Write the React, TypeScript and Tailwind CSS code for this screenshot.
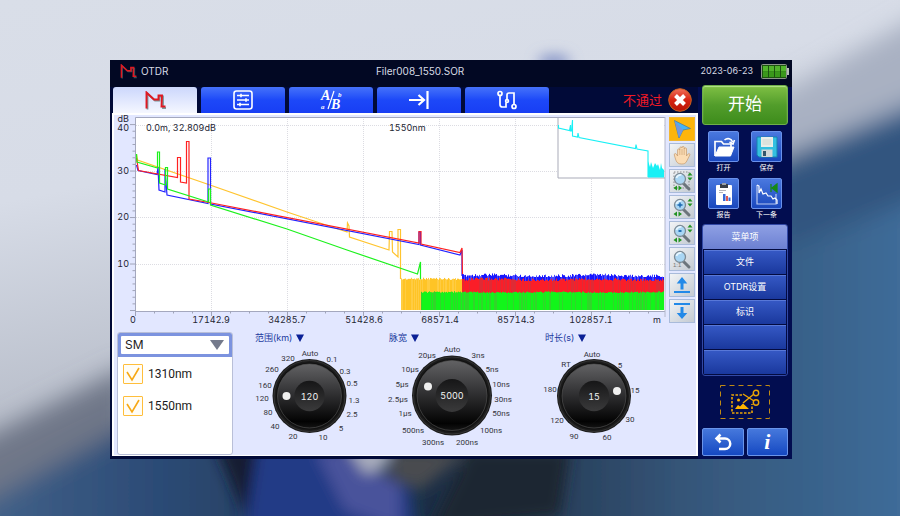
import React, { useState } from "react";

const SANS = "font-['Inter','Noto_Sans_CJK_SC',sans-serif]";
const NARROW = "font-['Roboto','Noto_Sans_CJK_SC',sans-serif]";

/* ---------- Backdrop ---------- */

function Backdrop() {
  return (
    <svg
      className="absolute inset-0 h-full w-full"
      viewBox="0 0 900 516"
      preserveAspectRatio="xMidYMid slice"
      aria-hidden="true"
    >
      <defs>
        <linearGradient id="sky" x1="0" y1="0" x2="0.35" y2="1">
          <stop offset="0" stopColor="#d9dee8" />
          <stop offset="0.35" stopColor="#d7dce7" />
          <stop offset="1" stopColor="#a3a9b6" />
        </linearGradient>
        <linearGradient id="sea" x1="0" y1="0" x2="1" y2="0">
          <stop offset="0" stopColor="#45658c" />
          <stop offset="0.2" stopColor="#2c4b76" />
          <stop offset="0.5" stopColor="#1d2d42" />
          <stop offset="0.75" stopColor="#36577b" />
          <stop offset="0.9" stopColor="#3a658f" />
          <stop offset="1" stopColor="#42709f" />
        </linearGradient>
        <filter id="soft" x="-20%" y="-20%" width="140%" height="140%">
          <feGaussianBlur stdDeviation="12" />
        </filter>
        <filter id="softer" x="-60%" y="-60%" width="220%" height="220%">
          <feGaussianBlur stdDeviation="7" />
        </filter>
      </defs>
      <rect width="900" height="516" fill="url(#sky)" />
      <g filter="url(#soft)">
        <polygon points="930,10 770,100 770,190 930,110" fill="#a9b1c2" />
        <polygon points="-40,450 130,365 130,470 -40,510" fill="#6f7788" />
        <polygon points="-40,515 130,425 500,300 780,158 940,92 940,560 -40,560" fill="url(#sea)" />
        <polygon points="780,170 940,100 940,190 780,250" fill="#30557f" />
      </g>
      <g filter="url(#softer)">
        <polygon points="215,445 262,445 275,516 245,516" fill="#131b33" />
        <polygon points="258,445 330,445 410,490 415,530 245,530" fill="#213a86" />
        <polygon points="315,450 345,450 400,485 400,530 345,510" fill="#4a529b" />
        <polygon points="345,445 395,445 385,468 365,474" fill="#a9adbd" />
        <polygon points="395,450 470,450 420,490 390,478" fill="#4a4c50" />
        <polygon points="470,450 570,450 560,516 430,530" fill="#1b2533" />
        <ellipse cx="554" cy="62" rx="16" ry="7" fill="#7f8ec4" />
      </g>
    </svg>
  );
}

/* ---------- Glyphs ---------- */

function TraceMark({ className }: { className: string }) {
  return (
    <svg viewBox="0 0 21 19" className={className} fill="none" aria-hidden="true">
      <path d="M2.500 18.500V2.500L10 9.500H14.500V5.500H18V17H21" stroke="#4d7470" strokeWidth="1.800" opacity="0.700" />
      <path d="M1.500 17.500V1.500L9 8.500H13.500V4.500H17L16.500 15.500H20.500" stroke="#e01822" strokeWidth="1.900" />
    </svg>
  );
}

function Battery() {
  return (
    <svg viewBox="0 0 28 15" className="h-[15px] w-7" aria-label="电池">
      <rect x="0.5" y="0.5" width="25" height="14" rx="1" fill="#1c5310" stroke="#8d968a" />
      {[2, 8, 14, 20].map((x) => (
        <g key={x}>
          <rect x={x} y="2" width="5" height="5.500" fill="#52b32c" />
          <rect x={x} y="7.500" width="5" height="5.500" fill="#3a981b" />
        </g>
      ))}
      <rect x="26" y="4" width="2" height="7" fill="#b9beb9" />
    </svg>
  );
}

const tabIcons = [
  <TraceMark key="t" className="h-[19px] w-[21px]" />,
  <svg key="s" viewBox="0 0 20 20" className="h-5 w-5" fill="none" stroke="#fff" strokeWidth="1.6" aria-hidden="true">
    <rect x="1" y="1" width="18" height="18" rx="2.5" />
    <path d="M4 5.5h12M4 10h12M4 14.5h12M8 3.7v3.6M13 8.2v3.6M7 12.7v3.6" />
  </svg>,
  <svg key="a" viewBox="0 0 26 22" className="h-[22px] w-[26px]" fill="#fff" aria-hidden="true">
    <g fontFamily="Liberation Serif, serif" fontStyle="italic" fontWeight="700">
      <text x="3" y="11" fontSize="14">
        A
      </text>
      <text x="13" y="20" fontSize="14">
        B
      </text>
      <text x="20" y="8" fontSize="7">
        b
      </text>
      <text x="3" y="20" fontSize="7">
        a
      </text>
    </g>
    <path d="M16 2L10 20" stroke="#fff" strokeWidth="1.2" />
  </svg>,
  <svg key="e" viewBox="0 0 20 20" className="h-5 w-5" fill="none" stroke="#fff" strokeWidth="2.200" aria-hidden="true">
    <path d="M0 10h14M9.500 5l5.500 5-5.500 5M18.500 1v18" />
  </svg>,
  <svg key="r" viewBox="0 0 20 20" className="h-5 w-5" fill="none" stroke="#fff" strokeWidth="1.7" aria-hidden="true">
    <circle cx="3" cy="3.500" r="2" />
    <circle cx="17" cy="16.500" r="2" />
    <circle cx="10" cy="11" r="1.400" />
    <path d="M3 5.500V14.500Q3 17 5.500 17H9V12.500M10 9.500V5Q10 3 12 3H17V14.500" />
  </svg>,
];

const tabNames = ["曲线", "参数", "A/B", "末端", "链路"];

function Magnifier({ mark, pads }: { mark: string; pads: boolean }) {
  return (
    <svg viewBox="0 0 22 22" className="h-[22px] w-[22px]" aria-hidden="true">
      {mark === "box" && (
        <rect x="3" y="2" width="15" height="16" fill="none" stroke="#777" strokeWidth="0.8" strokeDasharray="1.500 1.500" />
      )}
      <path d="M12 13l6 6" stroke="#6c757c" strokeWidth="3" strokeLinecap="round" />
      <circle cx="9" cy="9" r="5.500" fill="#a9d6f4" stroke="#7d8b96" strokeWidth="1.300" />
      <path d="M5.500 8a4 4 0 0 1 5-3" stroke="#e6f6ff" strokeWidth="1.800" fill="none" />
      {mark === "plus" && <path d="M6.500 9h5M9 6.500v5" stroke="#1766ad" strokeWidth="1.400" />}
      {mark === "minus" && <path d="M7.500 9h3" stroke="#1766ad" strokeWidth="1.800" />}
      {mark === "one" && (
        <text x="2" y="19" fontSize="6" fill="#777" fontFamily="Liberation Sans, sans-serif">
          1:1
        </text>
      )}
      {pads && (
        <g fill="#229322">
          <path d="M16.500 5.500l2.500-3 2.500 3zM16.500 7.500l2.500 3 2.500-3z" />
          <path d="M6 15.500l-3.500 2.500 3.500 2.500zM7.500 15.500l3.500 2.500-3.500 2.500z" />
        </g>
      )}
    </svg>
  );
}

function Arrow({ down }: { down?: boolean }) {
  return (
    <svg viewBox="0 0 20 20" className="h-5 w-5" fill="#2289e8" aria-hidden="true">
      {down ? (
        <path d="M2 2h16v2H2zM8.500 6h3v6h3.800l-5.300 6-5.300-6h3.800z" />
      ) : (
        <path d="M2 16h16v2H2zM8.500 14.500h3v-6h3.800l-5.300-6.500-5.300 6.500h3.800z" />
      )}
    </svg>
  );
}

const tools = [
  {
    name: "选择",
    icon: (
      <svg viewBox="0 0 20 20" className="h-5 w-5" aria-hidden="true">
        <path d="M2.500 1.500L18.500 9.500l-7.500 1.500-4 8z" fill="#45b4f5" stroke="#4f7993" strokeWidth="0.700" />
        <path d="M2.500 1.500L11 11l-4 8z" fill="#7397df" />
      </svg>
    ),
  },
  {
    name: "平移",
    icon: (
      <svg viewBox="0 0 20 20" className="h-5 w-5" aria-hidden="true">
        <path
          d="M5.600 11V5a1.100 1.100 0 0 1 2.200 0V3a1.100 1.100 0 0 1 2.200 0V2.500a1.100 1.100 0 0 1 2.200 0V4a1.100 1.100 0 0 1 2.300 0v7l1.600-2c1-1 2.200 0 1.700 1l-3 6c-1 2.500-3 3-5 3-3 0-5-1-6-4l-1.500-5c-.4-1.500 1.300-2 2-1z"
          fill="#fbdcb4"
          stroke="#c49a6c"
          strokeWidth="0.700"
        />
        <path d="M7.800 5v5M10 4v6M12.200 4v6" stroke="#c49a6c" strokeWidth="0.600" />
      </svg>
    ),
  },
  { name: "框选缩放", icon: <Magnifier mark="box" pads /> },
  { name: "放大", icon: <Magnifier mark="plus" pads /> },
  { name: "缩小", icon: <Magnifier mark="minus" pads /> },
  { name: "原始比例", icon: <Magnifier mark="one" pads={false} /> },
  { name: "上移", icon: <Arrow /> },
  { name: "下移", icon: <Arrow down /> },
];

/* ---------- Chart ---------- */

const xLabels: [number, string][] = [
  [133, "0"],
  [211, "17142.9"],
  [287, "34285.7"],
  [364, "51428.6"],
  [440, "68571.4"],
  [516, "85714.3"],
  [591, "102857.1"],
  [657, "m"],
];

const yLabels: [number, string][] = [
  [122, "dB"],
  [131, "40"],
  [174, "30"],
  [220, "20"],
  [267, "10"],
];

const wobble = (i: number, seed: number) => {
  const v = Math.sin(i * 12.9898 + seed * 78.233) * 43758.5453;
  return v - Math.floor(v);
};

function Noise(props: { from: number; to: number; top: number; bottom: number; jitter: number; seed: number; colors: string[] }) {
  const { from, to, top, bottom, jitter, seed, colors } = props;
  const bars = [];
  for (let x = from; x < to; x += 1) {
    const i = x - from;
    const y = top + wobble(i, seed) * jitter - Math.sin(i / 17) * jitter * 0.2;
    const tone = wobble(i, seed + 5) > 0.72 ? 1 : 0;
    bars.push(<rect key={x} x={x} y={y} width={1} height={bottom - y} fill={colors[tone]} />);
  }
  return (
    <g>
      <rect x={from} y={top + jitter} width={to - from} height={bottom - top - jitter} fill={colors[0]} />
      {bars}
    </g>
  );
}

function Chart() {
  const yTicks = Array.from({ length: 29 }, (_, i) => 310.5 - i * 6.64);
  const xTicks = Array.from({ length: 28 }, (_, i) => 135.500 + i * 19);
  return (
    <svg viewBox="114 115 554 211" className="block min-w-0 flex-1 overflow-visible" role="img" aria-label="OTDR 曲线">
      <rect x="136" y="117" width="529" height="194" fill="#fff" />
      <g stroke="#dcdce2" strokeDasharray="1 1">
        {[211.5, 287.5, 363.5, 439.5, 515.5, 591.5].map((x) => (
          <path key={x} d={`M${x} 117V311`} />
        ))}
        {[125.5, 171.5, 217.5, 264.5].map((y) => (
          <path key={y} d={`M136 ${y}H665`} />
        ))}
      </g>
      <path d="M135.500 311V117.500H665M135.500 311.500H665" fill="none" stroke="#a4a8be" />
      <path d="M665 117V317" stroke="#b4b8ca" />
      <g stroke="#a0a4b8">
        {yTicks.map((y, i) => (
          <path key={i} d={`M${i % 7 === 0 ? 130 : 132.5} ${y}H135.500`} />
        ))}
        {xTicks.map((x, i) => (
          <path key={i} d={`M${x} 311V${i % 4 === 0 ? 316 : 313.5}`} />
        ))}
      </g>

      <g fill="none" strokeWidth="1.200">
        <path
          stroke="#ffc42e"
          d="M136.500 154L137.500 160L210 185L287 212L347 232L347.500 223L349 226L349.500 237L389 250L389.500 231.500H392L392.500 252L398 257V229.500H400.500V279"
        />
        <path
          stroke="#2323ff"
          d="M136.500 165L138 170.500L157 174.500L158 167L159 190L165 192V169L167 195L208 203.500V158H210.500V204L419 244.500V232H420.500V245L460 255L462 250V276"
        />
        <path
          stroke="#ff2020"
          d="M136.500 158L138.500 170.500L177.500 177.500V157.500H180.500V182L186.500 183V141.500H189V199L209 202.500L419 243V231.500H421V244L460 252.500L462 248L462.500 276"
        />
        <path
          stroke="#1cf11c"
          d="M136.500 154L137 162L157.500 168V152H159.500V183L165.500 185V167.500H167.500V189L208.500 202V189H210.500V205L287 229L347 250L417.500 274L420.500 262V309"
        />
      </g>

      <Noise from={401} to={462} top={278} bottom={310} jitter={2} seed={1} colors={["#ffc425", "#ffcc42"]} />
      <Noise from={462} to={664} top={274} bottom={286} jitter={3} seed={2} colors={["#1616ff", "#4747ff"]} />
      <Noise from={462} to={664} top={278} bottom={294} jitter={3} seed={3} colors={["#fb1e28", "#df2b35"]} />
      <Noise from={421} to={664} top={291.5} bottom={310} jitter={1.5} seed={4} colors={["#12f51a", "#31d52a"]} />

      <rect x="558" y="118" width="106" height="60" fill="#fff" />
      <path d="M558 118V178H665" fill="none" stroke="#a9abb8" />
      <path
        fill="none"
        stroke="#19f0f5"
        strokeWidth="1.100"
        d="M558.500 125V128L569.500 130.500L570.500 125V131L571.500 131L572.500 120V136L577.500 137L578 133L579 137.500L635.500 148.500L636 144.500L637 149L648 151V177"
      />
      <path d="M648 177.500V161L650 167L651 162L653 168L655 163L657 166L658 164L660 170L661 163L662 168L664 170V177.500Z" fill="#19f0f5" />

      <g fontFamily="Inter, sans-serif" fontSize="9" fill="#242633" className="tabular-nums">
        {yLabels.map(([y, t]) => (
          <text key={t} x="129" y={y} textAnchor="end">
            {t}
          </text>
        ))}
        {xLabels.map(([x, t]) => (
          <text key={t} x={x} y="323" textAnchor="middle">
            {t}
          </text>
        ))}
        <text x="146" y="131">
          0.0m, 32.809dB
        </text>
        <text x="389" y="131">
          1550nm
        </text>
      </g>
    </svg>
  );
}

/* ---------- Dials ---------- */

type Dial = {
  title: string;
  pad: string;
  left: number;
  cx: number;
  cy: number;
  r: number;
  value: string;
  dot: [number, number];
  marks: [number, number, string][];
};

const dials: Dial[] = [
  {
    title: "范围(km)",
    pad: "pl-4",
    left: 239,
    cx: 309.5,
    cy: 396,
    r: 37,
    value: "120",
    dot: [286.5, 396],
    marks: [
      [310, 353, "Auto"], [332, 359, "0.1"], [345, 371, "0.3"], [352, 383, "0.5"], [354, 400, "1.3"],
      [352, 414, "2.5"], [341, 428, "5"], [323, 437, "10"], [293, 436, "20"], [275, 426, "40"],
      [268, 412, "80"], [262, 398, "120"], [265, 385, "160"], [272, 369, "260"], [288, 358, "320"],
    ],
  },
  {
    title: "脉宽",
    pad: "pl-2",
    left: 381,
    cx: 452,
    cy: 395.5,
    r: 40,
    value: "5000",
    dot: [428, 386.5],
    marks: [
      [452, 349, "Auto"], [478, 355, "3ns"], [492, 369, "5ns"], [501, 384, "10ns"], [503, 399, "30ns"],
      [501, 413, "50ns"], [491, 430, "100ns"], [467, 442, "200ns"], [433, 442, "300ns"], [413, 430, "500ns"],
      [405, 413, "1µs"], [398, 399, "2.5µs"], [402, 384, "5µs"], [410, 369, "10µs"], [427, 355, "20µs"],
    ],
  },
  {
    title: "时长(s)",
    pad: "pl-[22px]",
    left: 523,
    cx: 594,
    cy: 396,
    r: 37,
    value: "15",
    dot: [617, 391],
    marks: [
      [592, 354, "Auto"], [620, 365, "5"], [635, 390, "15"], [630, 419, "30"], [607, 437, "60"],
      [574, 436, "90"], [557, 420, "120"], [550, 389, "180"], [566, 364, "RT"],
    ],
  },
];

function DialControl({ dial }: { dial: Dial }) {
  const { cx, cy, r } = dial;
  return (
    <div className="min-w-0">
      <button type="button" className={`flex h-3 items-center gap-1 text-[9px] leading-3 text-[#1c3a9e] ${dial.pad}`}>
        {dial.title}
        <svg viewBox="0 0 8 8" className="h-2 w-2" fill="#0a2096" aria-hidden="true">
          <path d="M0 0.500h8L4 8z" />
        </svg>
      </button>
      <div className="relative">
        <svg viewBox={`${dial.left} 344 142 111`} className="block w-full" aria-hidden="true">
          <defs>
            <linearGradient id="cap" x1="0" y1="0" x2="0" y2="1">
              <stop offset="0" stopColor="#626264" />
              <stop offset="0.45" stopColor="#323234" />
              <stop offset="0.9" stopColor="#030303" />
              <stop offset="1" stopColor="#141414" />
            </linearGradient>
            <linearGradient id="hub" x1="0" y1="0" x2="0" y2="1">
              <stop offset="0" stopColor="#161617" />
              <stop offset="1" stopColor="#3a3a3b" />
            </linearGradient>
          </defs>
          <circle cx={cx} cy={cy} r={r} fill="#1b1b1b" />
          <circle cx={cx} cy={cy} r={r - 1.5} fill="none" stroke="#343434" />
          <circle cx={cx} cy={cy} r={r - 3.5} fill="#111" />
          <circle cx={cx} cy={cy} r={r - 5} fill="url(#cap)" stroke="#555" strokeWidth="0.600" />
          <circle cx={cx} cy={cy} r={r * 0.41} fill="url(#hub)" />
          <circle cx={dial.dot[0]} cy={dial.dot[1]} r="4" fill="#f0f0f0" />
          <text
            x={cx}
            y={cy + 3.5}
            textAnchor="middle"
            fontFamily="Inter, sans-serif"
            fontSize={9}
            fill="#f2f2f2"
            className="tabular-nums"
          >
            {dial.value}
          </text>
          <g className={NARROW} fontSize="8" fill="#34353c" textAnchor="middle">
            {dial.marks.map(([x, y, t]) => (
              <text key={t} x={x} y={y + 3}>
                {t}
              </text>
            ))}
          </g>
        </svg>
        <input
          type="range"
          min={0}
          max={dial.marks.length - 1}
          defaultValue={0}
          aria-label={dial.title}
          className="absolute inset-x-8 inset-y-4 cursor-pointer opacity-0"
        />
      </div>
    </div>
  );
}

/* ---------- Side column ---------- */

const shortcuts = [
  {
    name: "打开",
    icon: (
      <svg viewBox="0 0 24 24" className="h-6 w-6" fill="none" aria-hidden="true">
        <path d="M3 21V6.500h6.500l2 2.500h7.500v3" stroke="#fff" strokeWidth="1.700" />
        <path d="M3 21l4-9h15L18.500 21z" fill="#fff" stroke="#fff" strokeLinejoin="round" />
        <path d="M12.500 5c3-2.500 7-1.500 8 2M22.500 5L21 9l-3.500-2" stroke="#fff" strokeWidth="1.600" />
      </svg>
    ),
  },
  {
    name: "保存",
    icon: (
      <svg viewBox="0 0 24 24" className="h-6 w-6" aria-hidden="true">
        <path d="M2 2h20v20H4l-2-2z" fill="#33bfe0" stroke="#1682ae" />
        <rect x="6" y="2" width="12" height="10" fill="#e9eee9" />
        <path d="M7.500 5h9M7.500 7h9M7.500 9h9" stroke="#c4ccc6" strokeWidth="0.700" />
        <rect x="6.500" y="14.500" width="11" height="7.500" fill="#d3d7d8" />
        <rect x="8" y="16" width="3" height="5" fill="#35566c" />
      </svg>
    ),
  },
  {
    name: "报告",
    icon: (
      <svg viewBox="0 0 24 24" className="h-6 w-6" aria-hidden="true">
        <rect x="4" y="3" width="16" height="20" rx="1" fill="#fff" />
        <path d="M8 2h8v4H8z" fill="#383e47" />
        <path d="M10 1h4v2h-4z" fill="#9aa0a8" />
        <path d="M7 8.500h7M7 10.500h4" stroke="#b3b3bb" />
        <path d="M11 12h2.500v7H11z" fill="#3667d4" />
        <path d="M14 14h2v5h-2z" fill="#e0564e" />
        <path d="M16.500 15.500h2V19h-2z" fill="#3667d4" />
      </svg>
    ),
  },
  {
    name: "下一条",
    icon: (
      <svg viewBox="0 0 24 24" className="h-6 w-6" fill="none" aria-hidden="true">
        <path d="M2 3v19h19V12" stroke="#b8c8ef" strokeWidth="1.200" />
        <path d="M2 3l2 1v7l2-4 2 5 3-1 2 3 3 0 2 3 2-1 2 2V22" stroke="#fff" strokeWidth="1.200" />
        <path d="M16 2v8M22 2l-5 4 5 4z" fill="#168a16" stroke="#168a16" strokeWidth="1.300" />
      </svg>
    ),
  },
];

const menuItems = ["文件", "OTDR设置", "标识", "", ""];

function SideColumn() {
  return (
    <aside className="flex w-[94px] shrink-0 flex-col bg-[#020d50] px-1 pb-[3px]">
      <button
        type="button"
        className="mt-[-2px] h-10 rounded-[3px] border border-[#6fae4a] bg-linear-to-b from-[#7fc044] via-[#529d2b] to-[#3d8c1b] pb-[2px] text-[17px] leading-5 text-white shadow-[inset_0_1px_1px_#b5e58c]"
      >
        开始
      </button>

      <div className="mt-[6px] grid grid-cols-2 gap-y-[5px]">
        {shortcuts.map((s) => (
          <button key={s.name} type="button" className="flex flex-col items-center gap-px text-[7px] leading-[10px] text-white">
            <span className="flex h-[31px] w-[31px] items-center justify-center rounded-[2px] border border-[#6a91ea] bg-linear-to-b from-[#4a78df] to-[#1947bd]">
              {s.icon}
            </span>
            {s.name}
          </button>
        ))}
      </div>

      <nav className="mt-1 flex flex-col rounded-[3px] border border-[#3249a6] bg-[#030b40] text-[9px] text-white">
        <div className="flex h-6 items-center justify-center rounded-t-[2px] bg-linear-to-b from-[#8fa0e4] to-[#6c80d2]">菜单项</div>
        <div className="flex flex-col gap-px p-px">
          {menuItems.map((m, i) => (
            <button
              key={i}
              type="button"
              aria-label={m || "空"}
              className="h-6 border-t border-[#5878d8] bg-linear-to-b from-[#3558c4] to-[#1a389d] pb-px"
            >
              {m}
            </button>
          ))}
        </div>
      </nav>

      <button type="button" aria-label="截图" className="mt-[9px] self-center">
        <svg viewBox="0 0 50 34" className="h-[34px] w-[50px]" fill="none" stroke="#eba506" aria-hidden="true">
          <rect x="0.500" y="0.500" width="49" height="33" stroke="#c08a14" strokeDasharray="5 4" />
          <path d="M22 10H12V28H32V19" strokeWidth="1.600" strokeDasharray="2.500 1.500" />
          <circle cx="18.500" cy="15" r="1.500" fill="#ffb400" stroke="none" />
          <path d="M15 24l3-4 2 1.500 3-3 6 5.500z" fill="#ffb400" stroke="none" />
          <path d="M23 9l11 7M23 18l11-9" strokeWidth="1.400" />
          <circle cx="36" cy="8" r="2.700" strokeWidth="1.400" />
          <circle cx="36" cy="17.500" r="2.700" strokeWidth="1.400" />
        </svg>
      </button>

      <div className="mt-auto grid grid-cols-2 gap-[3px]">
        <button
          type="button"
          aria-label="返回"
          className="flex h-7 items-center justify-center rounded-[2px] border border-[#6a95ea] bg-linear-to-b from-[#4678dc] to-[#1548c2]"
        >
          <svg viewBox="0 0 18 18" className="h-[18px] w-[18px]" fill="none" stroke="#fff" strokeWidth="2.500" aria-hidden="true">
            <path d="M6.500 1.500L2.500 5.500l4 4M3 5.500h8a5 5 0 0 1 0 10.500H5" />
          </svg>
        </button>
        <button
          type="button"
          aria-label="信息"
          className="flex h-7 items-center justify-center rounded-[2px] border border-[#6a95ea] bg-linear-to-b from-[#4678dc] to-[#1548c2] font-['Liberation_Serif',serif] text-[22px] leading-none font-bold text-white italic"
        >
          i
        </button>
      </div>
    </aside>
  );
}

/* ---------- Fibre panel ---------- */

function FibrePanel() {
  return (
    <div className="flex h-[123px] w-[116px] shrink-0 flex-col rounded-[3px] border border-[#b9bfd8] bg-white">
      <div className="relative rounded-t-[2px] bg-[#7c93df] p-[3px]">
        <select
          aria-label="光纤类型"
          defaultValue="SM"
          className="block h-[18px] w-full appearance-none rounded-[1px] bg-white pl-1 text-[12px] leading-[18px] text-[#222]"
        >
          <option>SM</option>
          <option>MM</option>
        </select>
        <svg viewBox="0 0 14 10" className="pointer-events-none absolute top-[7px] right-2 h-[10px] w-[14px]" aria-hidden="true">
          <path d="M0 0h14L7 10z" fill="#747a8c" />
        </svg>
      </div>
      <div className={`flex flex-col gap-3 px-[5px] pt-[7px] text-[12px] leading-5 text-[#1b1b20] ${NARROW}`}>
        {["1310nm", "1550nm"].map((w) => (
          <label key={w} className="relative flex items-center gap-[5px]">
            <input
              type="checkbox"
              defaultChecked
              className="peer h-5 w-5 appearance-none rounded-[1px] border border-[#ffbe3b] bg-[#fffdf6]"
            />
            <svg
              viewBox="0 0 20 20"
              className="pointer-events-none absolute top-0 left-0 hidden h-5 w-5 peer-checked:block"
              fill="none"
              stroke="#f7a814"
              strokeWidth="1.600"
              aria-hidden="true"
            >
              <path d="M4 8l5 8L16 4" />
            </svg>
            {w}
          </label>
        ))}
      </div>
    </div>
  );
}

/* ---------- Screen ---------- */

export default function App() {
  const [tab, setTab] = useState(0);
  const [tool, setTool] = useState(0);

  return (
    <main className={`relative min-h-screen overflow-hidden bg-[#c9ceda] pt-[60px] pr-[108px] pb-[57px] pl-[110px] ${SANS}`}>
      <Backdrop />
      <div className="relative bg-[#010a38]">
        <header className="flex h-[27px] items-center bg-[#020823] pb-[5px] text-[10px] leading-4 text-[#d7dae3]">
          <div className="flex w-[39%] items-center gap-1 pl-[10px]">
            <TraceMark className="h-[15px] w-[17px]" />
            <h1>OTDR</h1>
          </div>
          <div className="flex-1">Filer008_1550.SOR</div>
          <time className="text-[9px]">2023-06-23</time>
          <span className="mr-[3px] ml-2">
            <Battery />
          </span>
        </header>

        <div className="flex">
          <div className="min-w-0 flex-1 pb-[3px] pl-[2px]">
            <div className="flex h-[26px] items-stretch gap-1 pr-[6px] pl-px">
              {tabNames.map((name, i) => (
                <button
                  key={name}
                  type="button"
                  aria-label={name}
                  aria-pressed={tab === i}
                  onClick={() => setTab(i)}
                  className={`flex w-[84px] items-center justify-center rounded-t-[3px] ${
                    tab === i ? "bg-linear-to-b from-[#ccd7fc] to-[#f5f7ff]" : "bg-linear-to-b from-[#4671fa] via-[#1d48f8] to-[#183ef4]"
                  }`}
                >
                  {tabIcons[i]}
                </button>
              ))}
              <div className="ml-auto flex items-center gap-[6px] text-[13px] leading-5 text-[#f01a26]">
                不通过
                <button type="button" aria-label="关闭">
                  <svg viewBox="0 0 24 24" className="h-6 w-6" aria-hidden="true">
                    <defs>
                      <linearGradient id="stop" x1="0" y1="0" x2="0" y2="1">
                        <stop offset="0" stopColor="#f0705a" />
                        <stop offset="0.5" stopColor="#d62312" />
                        <stop offset="1" stopColor="#b81405" />
                      </linearGradient>
                    </defs>
                    <circle cx="12" cy="12" r="11.300" fill="url(#stop)" stroke="#c2621f" strokeWidth="1" />
                    <path d="M7.500 7.500l9 9M16.500 7.500l-9 9" stroke="#fff" strokeWidth="4" />
                  </svg>
                </button>
              </div>
            </div>

            <div className="border-x-2 border-t-2 border-b border-white bg-[#e2e7ff]">
              <div className="flex items-start gap-px pr-px">
                <Chart />
                <div className="flex w-[26px] shrink-0 flex-col gap-[2px] pt-[2px]">
                  {tools.map((t, i) => (
                    <button
                      key={t.name}
                      type="button"
                      aria-label={t.name}
                      aria-pressed={tool === i}
                      onClick={() => setTool(i)}
                      className={`flex h-6 items-center justify-center border ${
                        tool === i ? "border-[#f1b733] bg-[#fdb50c]" : "border-[#a9bbda] bg-linear-to-br from-[#f2f4f6] to-[#c3cad2]"
                      }`}
                    >
                      {t.icon}
                    </button>
                  ))}
                </div>
              </div>
              <div className="flex gap-[6px] pt-[6px] pr-[31px] pl-[3px]">
                <FibrePanel />
                <div className="grid min-w-0 flex-1 grid-cols-3">
                  {dials.map((d) => (
                    <DialControl key={d.title} dial={d} />
                  ))}
                </div>
              </div>
            </div>
          </div>
          <SideColumn />
        </div>
      </div>
    </main>
  );
}
